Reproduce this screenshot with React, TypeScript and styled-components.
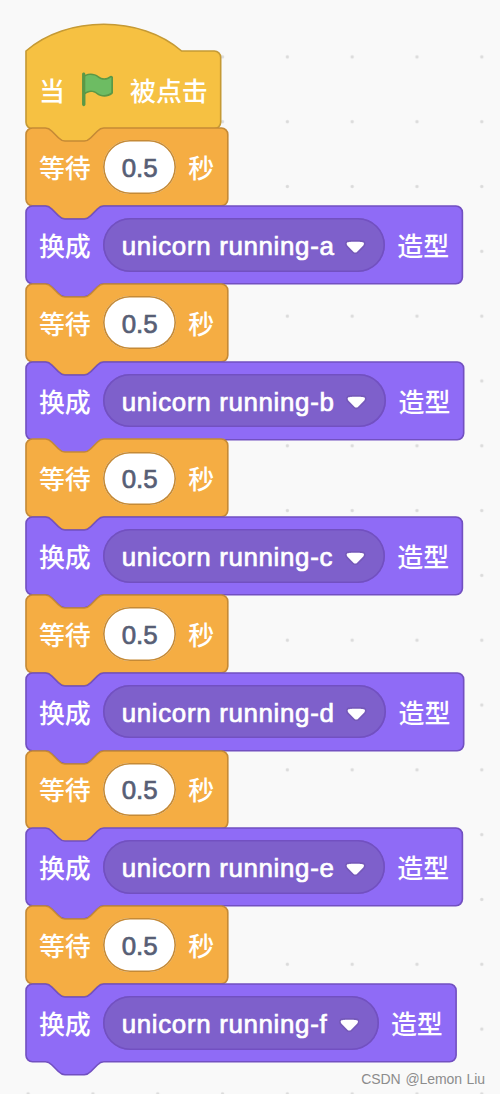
import React from "react";
import styled, { createGlobalStyle } from "styled-components";

// One workspace unit in CSS pixels.
const U = 1.6207;

const GlobalStyle = createGlobalStyle`
  body { margin: 0; background: #f9f9f9; }
`;

const Workspace = styled.main`
  position: relative;
  box-sizing: border-box;
  width: 500px;
  height: 1094px;
  overflow: hidden;
  padding: 50.5px 0 0 25.9px;
  background-color: #f9f9f9;
  background-image: radial-gradient(circle, #dbdbdb 1.2px, rgba(219, 219, 219, 0) 2.1px);
  background-size: 64.82px 64.82px;
  background-position: -4.3px 24.5px;
`;

const Stack = styled.div`
  display: flex;
  flex-direction: column;
  align-items: flex-start;
`;

const BlockBox = styled.div<{ $width: number }>`
  position: relative;
  display: flex;
  align-items: center;
  box-sizing: border-box;
  width: ${(p) => p.$width}px;
  height: ${48 * U}px;
  padding-left: 13px;
`;

const Outline = styled.svg`
  position: absolute;
  left: 0;
  top: 0;
  width: 100%;
  height: 100%;
  overflow: visible;
`;

const Label = styled.span<{ $gap?: number; $drop?: number }>`
  position: relative;
  margin-left: ${(p) => p.$gap ?? 0}px;
  padding-top: ${(p) => p.$drop ?? 0}px;
  font: 500 25.9px/36px "Noto Sans CJK SC", sans-serif;
  color: #fff;
  white-space: nowrap;
`;

const Pill = styled.div<{ $width: number; $fill: string; $line: string; $ink: string; $spacing?: number }>`
  position: relative;
  display: flex;
  align-items: center;
  box-sizing: border-box;
  width: ${(p) => p.$width + U}px;
  height: ${33 * U}px;
  margin-left: 12.2px;
  padding: 2px 19.5px 0 18.8px;
  box-shadow: inset 0 0 0 1.62px ${(p) => p.$line};
  border-radius: 27px;
  background: ${(p) => p.$fill};
  color: ${(p) => p.$ink};
  font: 400 25.9px/34px "Liberation Sans", Arial, sans-serif;
  letter-spacing: ${(p) => p.$spacing ?? 0}px;
  -webkit-text-stroke: 0.7px ${(p) => p.$ink};
  white-space: nowrap;
`;

const Arrow = styled.svg`
  flex: none;
  width: ${12.71 * U}px;
  height: ${8.79 * U}px;
  margin-left: auto;
  margin-top: 2px;
`;

const Flag = styled.svg`
  position: relative;
  width: ${24 * U}px;
  height: ${24 * U}px;
  margin-left: 13.2px;
`;

const Credit = styled.span`
  position: absolute;
  right: 15px;
  top: 1070px;
  font: 400 14px/18px "Liberation Sans", Arial, sans-serif;
  word-spacing: 1px;
  letter-spacing: -0.1px;
  color: #8c8c8c;
  white-space: nowrap;
`;

const themes = {
  event: { fill: "#f6c142", line: "#c59a35" },
  control: { fill: "#f5ad43", line: "#c58a36" },
  looks: { fill: "#8f6bf6", line: "#7250c1" },
};

const NOTCH = "H12c2,0 3,1 4,2l4,4c1,1 2,2 4,2h12c2,0 3,-1 4,-2l4,-4c1,-1 2,-2 4,-2";
const BUMP = "H48c-2,0 -3,1 -4,2l-4,4c-1,1 -2,2 -4,2h-12c-2,0 -3,-1 -4,-2l-4,-4c-1,-1 -2,-2 -4,-2H4a4,4 0 0,1 -4,-4z";

type BlockProps = {
  kind: keyof typeof themes;
  width: number;
  hat?: boolean;
  children: React.ReactNode;
};

function Block({ kind, width, hat, children }: BlockProps) {
  const w = width / U;
  const top = hat ? "M0,0c25,-22 71,-22 96,0" : `M0,4A4,4 0 0,1 4,0${NOTCH}`;
  return (
    <BlockBox $width={width}>
      <Outline viewBox={`0 0 ${w} 48`} preserveAspectRatio="none">
        <path
          d={`${top}H${w - 4}a4,4 0 0,1 4,4v40a4,4 0 0,1 -4,4${BUMP}`}
          fill={themes[kind].fill}
          stroke={themes[kind].line}
        />
      </Outline>
      {children}
    </BlockBox>
  );
}

function WaitBlock() {
  return (
    <Block kind="control" width={201.8}>
      <Label>等待</Label>
      <Pill $width={71.7} $fill="#fff" $line="#c58a36" $ink="#575e75">0.5</Pill>
      <Label $gap={12.2}>秒</Label>
    </Block>
  );
}

function CostumeBlock({ name, pill }: { name: string; pill: number }) {
  return (
    <Block kind="looks" width={pill + 155.8}>
      <Label>换成</Label>
      <Pill $width={pill} $fill="#7e60cb" $line="#7250c1" $ink="#fff" $spacing={0.67}>
        unicorn running-{name}
        <Arrow viewBox="0 0 12.71 8.79">
          <path
            d="M12.71,2.44A2.41,2.41,0,0,1,12,4.16L8.08,8.08a2.45,2.45,0,0,1-3.45,0L0.72,4.16A2.42,2.42,0,0,1,0,2.44,2.48,2.48,0,0,1,.71.71C1,0.47,1.43,0,6.36,0S11.75,0.46,12,.71A2.44,2.44,0,0,1,12.71,2.44Z"
            fill="#231f20"
            opacity="0.1"
          />
          <path
            d="M6.36,7.79a1.43,1.43,0,0,1-1-.42L1.42,3.45a1.44,1.44,0,0,1,0-2c0.56-.56,9.31-0.56,9.87,0a1.44,1.44,0,0,1,0,2L7.37,7.37A1.43,1.43,0,0,1,6.36,7.79Z"
            fill="#fff"
          />
        </Arrow>
      </Pill>
      <Label $gap={12.2}>造型</Label>
    </Block>
  );
}

const costumes = [
  { name: "a", pill: 280.6 },
  { name: "b", pill: 281.9 },
  { name: "c", pill: 280.6 },
  { name: "d", pill: 281.9 },
  { name: "e", pill: 280.6 },
  { name: "f", pill: 274.3 },
];

export default function App() {
  return (
    <Workspace>
      <GlobalStyle />
      <Stack>
        <Block kind="event" width={194.7} hat>
          <Label $drop={2}>当</Label>
          <Flag viewBox="0 0 24 24">
            <path
              d="M20.8,3.7c-0.4-0.2-0.9-0.1-1.2,0.2c-2,1.6-4.8,1.6-6.8,0c-2.3-1.9-5.6-2.3-8.3-1v-0.4c0-0.6-0.5-1-1-1s-1,0.4-1,1v18.8c0,0.5,0.5,1,1,1h0.1c0.5,0,1-0.5,1-1v-6.4c1-0.7,2.1-1.2,3.4-1.3c1.2,0,2.4,0.4,3.4,1.2c2.9,2.3,7,2.3,9.8,0c0.3-0.2,0.4-0.5,0.4-0.9V4.7C21.6,4.2,21.3,3.8,20.8,3.7z"
              fill="#5b9846"
            />
            <path
              d="M20.6,4.8l-0.1,9.1c-2.5,2-6.1,2-8.6,0.1c-1.1-0.9-2.5-1.4-4-1.4c-1.2,0.1-2.3,0.5-3.4,1.1V4c2.5-1.4,5.5-1.1,7.7,0.6c2.4,1.9,5.7,1.9,8.1,0h0.2C20.5,4.7,20.5,4.7,20.6,4.8z"
              fill="#6dbc63"
            />
          </Flag>
          <Label $gap={13.2} $drop={2}>被点击</Label>
        </Block>
        {costumes.map((c) => (
          <React.Fragment key={c.name}>
            <WaitBlock />
            <CostumeBlock name={c.name} pill={c.pill} />
          </React.Fragment>
        ))}
      </Stack>
      <Credit>CSDN @Lemon Liu</Credit>
    </Workspace>
  );
}
